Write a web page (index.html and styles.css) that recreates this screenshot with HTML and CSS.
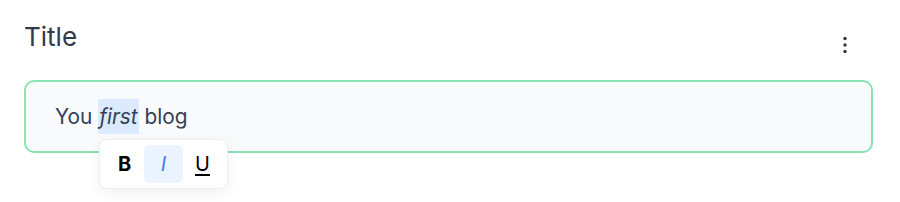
FILE: index.html
```html
<!DOCTYPE html>
<html lang="en">
<head>
<meta charset="UTF-8">
<meta name="viewport" content="width=device-width, initial-scale=1.0">
<title>Editor</title>
<link rel="stylesheet" href="styles.css">
</head>
<body>

<div class="block">
    <div class="block-head">
        <h2>Title</h2>
        <button class="more" aria-label="More">
            <svg width="4" height="18" viewBox="0 0 4 18">
                <circle cx="2" cy="2.5" r="1.7"/>
                <circle cx="2" cy="9" r="1.7"/>
                <circle cx="2" cy="15.5" r="1.7"/>
            </svg>
        </button>
    </div>

    <div class="editor">
        <p>You <span class="selected"><em>first</em></span> blog</p>

        <div class="toolbar">
            <button class="bold">B</button>
            <button class="italic active">I</button>
            <button class="under">U</button>
        </div>
    </div>
</div>

</body>
</html>
```

FILE: styles.css
```css
body {
    font-family: Inter, "Noto Sans", sans-serif;
    margin: 0;
    padding: 0;
    min-height: 202px;
    background: #fff;
    color: #334155;
}

.block {
    padding: 20px 27px 49px 24px;
}

.block-head {
    display: flex;
    justify-content: space-between;
    align-items: flex-start;
    height: 60px;
}

.block-head h2 {
    margin: 0;
    padding-top: 2px;
    font-size: 26px;
    font-weight: 400;
    line-height: 30px;
    color: #2f3a4b;
}

.more {
    border: none;
    background: none;
    padding: 0;
    margin: 16px 26px 0 0;
    width: 4px;
    height: 18px;
    cursor: pointer;
}

.more svg { fill: #2f3a4b; display: block; }

.editor {
    position: relative;
    height: 69px;
    border: 2px solid #8ae3b2;
    border-radius: 10px;
    background: #f8fafc;
    padding: 0 29px;
    display: flex;
    align-items: center;
}

.editor p {
    margin: 0;
    font-size: 20.8px;
    line-height: 35px;
    color: #334155;
}

.selected {
    display: inline-block;
    background: #dbeafe;
    padding: 0 1px;
}

.toolbar {
    position: absolute;
    left: 73px;
    top: 57px;
    display: flex;
    padding: 5px;
    background: #fff;
    border: 1px solid #eceef2;
    border-radius: 8px;
    box-shadow: 0 4px 14px rgba(15, 23, 42, 0.06);
}

.toolbar button {
    width: 39px;
    height: 38px;
    border: none;
    background: none;
    border-radius: 6px;
    font-family: Inter, "Noto Sans", sans-serif;
    font-size: 20px;
    color: #000;
    cursor: pointer;
}

.toolbar .bold { font-weight: 700; }
.toolbar .italic { font-style: italic; font-weight: 400; color: #3b82f6; }
.toolbar .under { text-decoration: underline; text-underline-offset: 3px; }

.toolbar .active { background: #ebf3fe; }
```
